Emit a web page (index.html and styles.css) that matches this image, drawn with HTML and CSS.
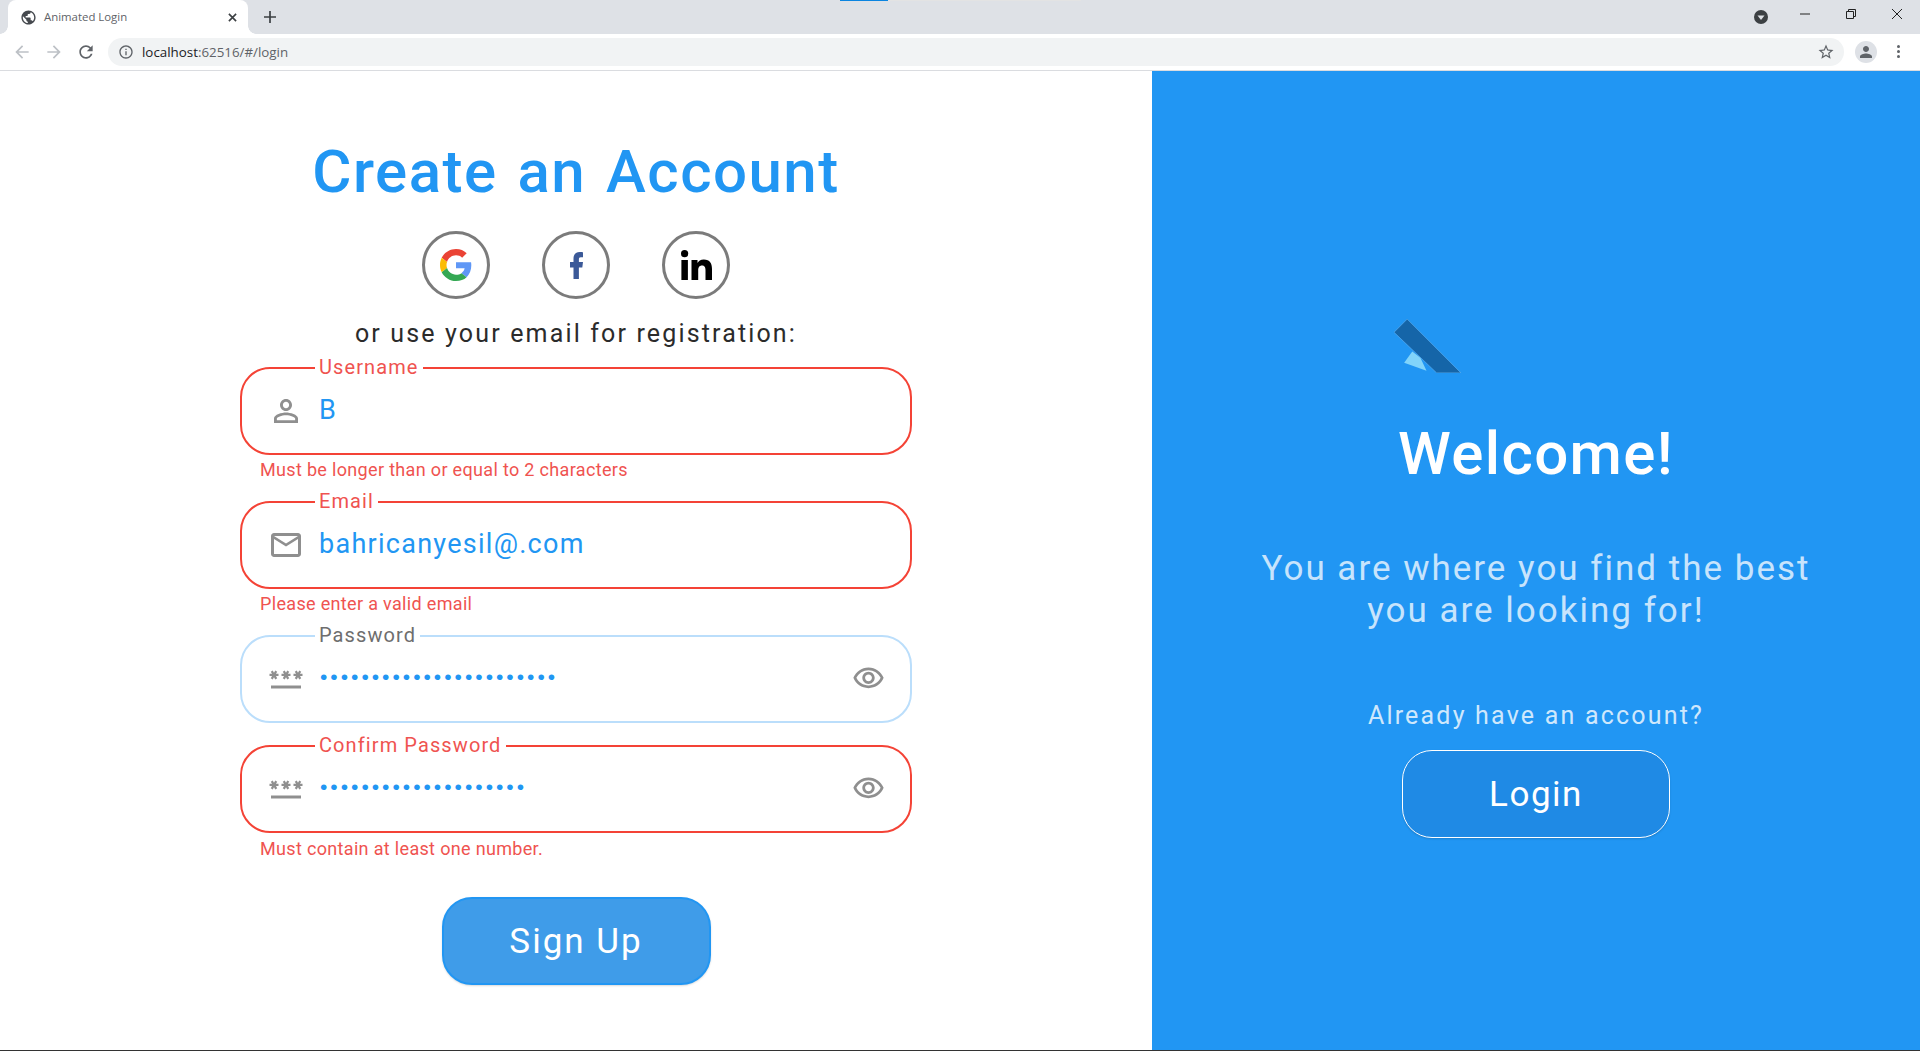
FILE: index.html
```html
<!DOCTYPE html>
<html lang="en">
<head>
    <meta charset="UTF-8">
    <title>Animated Login</title>
    <link rel="stylesheet" href="styles.css">
</head>
<body>
    <div class="tabStrip">
        <div class="tab">
            <svg class="tabIcon" viewBox="0 0 24 24"><path d="M12 2C6.48 2 2 6.48 2 12s4.48 10 10 10 10-4.48 10-10S17.52 2 12 2zm-1 17.93c-3.95-.49-7-3.85-7-7.93 0-.62.08-1.21.21-1.79L9 15v1c0 1.1.9 2 2 2v1.93zm6.9-2.54c-.26-.81-1-1.39-1.9-1.39h-1v-3c0-.55-.45-1-1-1H8v-2h2c.55 0 1-.45 1-1V7h2c1.1 0 2-.9 2-2v-.41c2.93 1.19 5 4.06 5 7.41 0 2.08-.8 3.97-2.1 5.39z"/></svg>
            <span class="tabTitle">Animated Login</span>
            <svg class="tabClose" viewBox="0 0 10 10"><path d="M1 1l8 8M9 1l-8 8"/></svg>
        </div>
        <svg class="newTab" viewBox="0 0 12 12"><path d="M6 0v12M0 6h12"/></svg>
        <div class="loadBar"><div class="loadDone"></div><div class="loadRest"></div></div>
        <div class="winControls">
            <svg class="winDrop" viewBox="0 0 14 14"><circle cx="7" cy="7" r="7"/><path class="winDropArrow" d="M3.5 5.5h7L7 10z"/></svg>
            <svg class="winBtn winMin" viewBox="0 0 10 10"><path d="M0 5h10"/></svg>
            <svg class="winBtn winRestore" viewBox="0 0 10 10"><path d="M.5 2.5h7v7h-7zM2.5 2.5v-2h7v7h-2"/></svg>
            <svg class="winBtn winClose" viewBox="0 0 10 10"><path d="M0 0l10 10M10 0L0 10"/></svg>
        </div>
    </div>

    <div class="toolbar">
        <svg class="navIcon navOff" viewBox="0 0 24 24"><path d="M20 11H7.83l5.59-5.59L12 4l-8 8 8 8 1.41-1.41L7.83 13H20v-2z"/></svg>
        <svg class="navIcon navOff" viewBox="0 0 24 24"><path d="M12 4l-1.41 1.41L16.17 11H4v2h12.17l-5.58 5.59L12 20l8-8z"/></svg>
        <svg class="navIcon" viewBox="0 0 24 24"><path d="M17.65 6.35C16.2 4.9 14.21 4 12 4c-4.42 0-7.99 3.58-7.99 8s3.57 8 7.99 8c3.73 0 6.84-2.55 7.73-6h-2.08c-.82 2.33-3.04 4-5.65 4-3.31 0-6-2.69-6-6s2.69-6 6-6c1.66 0 3.14.69 4.22 1.78L13 11h7V4l-2.35 2.35z"/></svg>
        <div class="addressBar">
            <svg class="infoIcon" viewBox="0 0 24 24"><path d="M11 7h2v2h-2zm0 4h2v6h-2zm1-9C6.48 2 2 6.48 2 12s4.48 10 10 10 10-4.48 10-10S17.52 2 12 2zm0 18c-4.41 0-8-3.59-8-8s3.59-8 8-8 8 3.59 8 8-3.59 8-8 8z"/></svg>
            <span class="url">localhost<span class="urlPath">:62516/#/login</span></span>
            <svg class="starIcon" viewBox="0 0 24 24"><path d="M22 9.24l-7.19-.62L12 2 9.19 8.63 2 9.24l5.46 4.73L5.82 21 12 17.27 18.18 21l-1.63-7.03L22 9.24zM12 15.4l-3.76 2.27 1-4.28-3.32-2.88 4.38-.38L12 6.1l1.71 4.04 4.38.38-3.32 2.88 1 4.28L12 15.4z"/></svg>
        </div>
        <div class="profile"><svg viewBox="0 0 24 24"><path d="M12 12c2.21 0 4-1.79 4-4s-1.79-4-4-4-4 1.79-4 4 1.79 4 4 4zm0 2c-2.67 0-8 1.34-8 4v2h16v-2c0-2.66-5.33-4-8-4z"/></svg></div>
        <div class="menuDots"><i></i><i></i><i></i></div>
    </div>

    <div class="page">
        <div class="signupPanel">
            <h1 class="signupTitle">Create an Account</h1>
            <div class="socialRow">
                <div class="socialBtn">
                    <svg class="googleIcon" viewBox="0 0 48 48">
                        <path fill="#EA4335" d="M24 9.5c3.54 0 6.71 1.22 9.21 3.6l6.85-6.85C35.9 2.38 30.47 0 24 0 14.62 0 6.51 5.38 2.56 13.22l7.98 6.19C12.43 13.72 17.74 9.5 24 9.5z"/>
                        <path fill="#5f97f6" d="M46.98 24.55c0-1.57-.15-3.09-.38-4.55H24v9.02h12.94c-.58 2.96-2.26 5.48-4.78 7.18l7.73 6c4.51-4.18 7.09-10.36 7.09-17.65z"/>
                        <path fill="#FBBC05" d="M10.53 28.59c-.48-1.45-.76-2.99-.76-4.59s.27-3.14.76-4.59l-7.98-6.19C.92 16.46 0 20.12 0 24c0 3.88.92 7.54 2.56 10.78l7.97-6.19z"/>
                        <path fill="#34A853" d="M24 48c6.48 0 11.93-2.13 15.89-5.81l-7.73-6c-2.15 1.45-4.92 2.3-8.16 2.3-6.26 0-11.57-4.22-13.47-9.91l-7.98 6.19C6.51 42.62 14.62 48 24 48z"/>
                    </svg>
                </div>
                <div class="socialBtn">
                    <svg class="facebookIcon" viewBox="0 0 13 27"><path d="M3.5 27V15.5H0V10h3.5V6.5C3.5 2.2 6 0 9.8 0c1.4 0 2.7.1 3.2.2v5h-2.2c-1.5 0-1.9.8-1.9 2V10H13l-.7 5.5H8.9V27z"/></svg>
                </div>
                <div class="socialBtn">
                    <svg class="linkedinIcon" viewBox="0 0 31 30"><circle cx="3.6" cy="3.6" r="3.6"/><path d="M.4 10h6.5v20H.4zM10.5 10h6v3c1-1.8 3-3.5 6.3-3.5 6.2 0 8.2 4 8.2 9.5V30h-6.5V20.5c0-2.5-.5-5-3.4-5-3 0-3.9 2.2-3.9 5V30h-6.7z"/></svg>
                </div>
            </div>
            <p class="signupHint">or use your email for registration:</p>

            <div class="field invalid">
                <label class="fieldLabel">Username</label>
                <svg class="fieldIcon" viewBox="0 0 24 24"><path d="M12 5.9c1.16 0 2.1.94 2.1 2.1s-.94 2.1-2.1 2.1S9.9 9.16 9.9 8s.94-2.1 2.1-2.1m0 9c2.97 0 6.1 1.46 6.1 2.1v1.1H5.9V17c0-.64 3.13-2.1 6.1-2.1M12 4C9.79 4 8 5.79 8 8s1.79 4 4 4 4-1.79 4-4-1.79-4-4-4zm0 9c-2.67 0-8 1.34-8 4v3h16v-3c0-2.66-5.33-4-8-4z"/></svg>
                <span class="fieldValue">B</span>
            </div>
            <div class="fieldError">Must be longer than or equal to 2 characters</div>

            <div class="field invalid">
                <label class="fieldLabel">Email</label>
                <svg class="fieldIcon" viewBox="0 0 24 24"><path d="M20 4H4c-1.1 0-1.99.9-1.99 2L2 18c0 1.1.9 2 2 2h16c1.1 0 2-.9 2-2V6c0-1.1-.9-2-2-2zm0 14H4V8l8 5 8-5v10zm-8-7L4 6h16l-8 5z"/></svg>
                <span class="fieldValue">bahricanyesil@.com</span>
            </div>
            <div class="fieldError">Please enter a valid email</div>

            <div class="field">
                <label class="fieldLabel">Password</label>
                <svg class="fieldIcon keyIcon" viewBox="0 0 24 24"><path d="M2 17h20v2H2v-2zm1.15-4.05L4 11.47l.85 1.48 1.3-.75-.85-1.48H7v-1.5H5.3l.85-1.47L4.85 7 4 8.47 3.15 7l-1.3.75.85 1.47H1v1.5h1.7l-.85 1.48 1.3.75zm6.7-.75 1.3.75.85-1.48.85 1.48 1.3-.75-.85-1.48H15v-1.5h-1.7l.85-1.47-1.3-.75L12 8.47 11.15 7l-1.3.75.85 1.47H9v1.5h1.7l-.85 1.48zM23 9.22h-1.7l.85-1.47-1.3-.75L20 8.47 19.15 7l-1.3.75.85 1.47H17v1.5h1.7l-.85 1.48 1.3.75.85-1.48.85 1.48 1.3-.75-.85-1.48H23v-1.5z"/></svg>
                <span class="fieldDots">•••••••••••••••••••••••</span>
                <svg class="fieldEye" viewBox="0 0 24 24"><path d="M12 6c3.79 0 7.17 2.13 8.82 5.5C19.17 14.87 15.79 17 12 17s-7.17-2.13-8.82-5.5C4.83 8.13 8.21 6 12 6m0-2C7 4 2.73 7.11 1 11.5 2.73 15.89 7 19 12 19s9.27-3.11 11-7.5C21.27 7.11 17 4 12 4zm0 5c1.38 0 2.5 1.12 2.5 2.5S13.38 14 12 14s-2.5-1.12-2.5-2.5S10.62 9 12 9m0-2c-2.48 0-4.5 2.02-4.5 4.5S9.52 16 12 16s4.5-2.02 4.5-4.5S14.48 7 12 7z"/></svg>
            </div>

            <div class="field invalid">
                <label class="fieldLabel">Confirm Password</label>
                <svg class="fieldIcon keyIcon" viewBox="0 0 24 24"><path d="M2 17h20v2H2v-2zm1.15-4.05L4 11.47l.85 1.48 1.3-.75-.85-1.48H7v-1.5H5.3l.85-1.47L4.85 7 4 8.47 3.15 7l-1.3.75.85 1.47H1v1.5h1.7l-.85 1.48 1.3.75zm6.7-.75 1.3.75.85-1.48.85 1.48 1.3-.75-.85-1.48H15v-1.5h-1.7l.85-1.47-1.3-.75L12 8.47 11.15 7l-1.3.75.85 1.47H9v1.5h1.7l-.85 1.48zM23 9.22h-1.7l.85-1.47-1.3-.75L20 8.47 19.15 7l-1.3.75.85 1.47H17v1.5h1.7l-.85 1.48 1.3.75.85-1.48.85 1.48 1.3-.75-.85-1.48H23v-1.5z"/></svg>
                <span class="fieldDots">••••••••••••••••••••</span>
                <svg class="fieldEye" viewBox="0 0 24 24"><path d="M12 6c3.79 0 7.17 2.13 8.82 5.5C19.17 14.87 15.79 17 12 17s-7.17-2.13-8.82-5.5C4.83 8.13 8.21 6 12 6m0-2C7 4 2.73 7.11 1 11.5 2.73 15.89 7 19 12 19s9.27-3.11 11-7.5C21.27 7.11 17 4 12 4zm0 5c1.38 0 2.5 1.12 2.5 2.5S13.38 14 12 14s-2.5-1.12-2.5-2.5S10.62 9 12 9m0-2c-2.48 0-4.5 2.02-4.5 4.5S9.52 16 12 16s4.5-2.02 4.5-4.5S14.48 7 12 7z"/></svg>
            </div>
            <div class="fieldError fieldErrorLast">Must contain at least one number.</div>

            <button class="signupBtn">Sign Up</button>
        </div>

        <div class="welcomePanel">
            <svg class="welcomeLogo" viewBox="0 0 66 53">
                <path class="logoWing" d="M18 32L10 43 32 51 26 38z"/>
                <path class="logoBody" d="M13 0L0 13 42 53H66z"/>
            </svg>
            <h2 class="welcomeTitle">Welcome!</h2>
            <p class="welcomeText">You are where you find the best<br>you are looking for!</p>
            <p class="welcomeHint">Already have an account?</p>
            <button class="loginBtn">Login</button>
        </div>
    </div>
</body>
</html>
```

FILE: styles.css
```css
* {
    box-sizing: border-box;
}
html, body {
    height: 1051px;
    overflow: hidden;
}
body {
    margin: 0;
    font-family: Roboto, sans-serif;
    background: white;
    border-bottom: 1px solid #333;
}

/* browser frame */
.tabStrip {
    display: flex;
    align-items: center;
    position: relative;
    height: 34px;
    padding-left: 8px;
    background: #dee1e6;
}
.tab {
    display: flex;
    align-items: center;
    position: relative;
    width: 240px;
    height: 34px;
    padding: 0 12px;
    background: white;
    border-radius: 8px 8px 0 0;
}
.tab::before, .tab::after {
    content: "";
    position: absolute;
    bottom: 0;
    width: 8px;
    height: 8px;
}
.tab::before {
    left: -8px;
    background: radial-gradient(circle at 0 0, #dee1e6 7.5px, white 8px);
}
.tab::after {
    right: -8px;
    background: radial-gradient(circle at 100% 0, #dee1e6 7.5px, white 8px);
}
.tabIcon {
    width: 17px;
    height: 17px;
    fill: #45494e;
}
.tabTitle {
    margin-left: 7px;
    margin-bottom: 1px;
    font: 11.4px "Open Sans", sans-serif;
    color: #5f6368;
}
.tabClose {
    width: 9px;
    height: 9px;
    margin-left: auto;
    margin-right: -1px;
    fill: none;
    stroke: #3c4043;
    stroke-width: 1.8;
}
.newTab {
    width: 12px;
    height: 12px;
    margin-left: 16px;
    fill: none;
    stroke: #3c4043;
    stroke-width: 1.7;
}
.loadBar {
    display: flex;
    position: absolute;
    top: 0;
    left: 840px;
}
.loadDone {
    width: 48px;
    height: 1px;
    background: #0a84e0;
}
.loadRest {
    width: 193px;
    height: 1px;
    background: #e3e3e3;
}
.winControls {
    display: flex;
    align-items: center;
    margin-left: auto;
    padding-right: 18px;
    margin-top: -6px;
}
.winDrop {
    width: 14px;
    height: 14px;
    margin-top: 6px;
    margin-right: 32px;
    fill: #3c4043;
}
.winDropArrow {
    fill: #dee1e6;
}
.winBtn {
    width: 10px;
    height: 10px;
    fill: none;
    stroke: #222;
    stroke-width: 1;
}
.winMin {
    margin-right: 36px;
}
.winRestore {
    margin-right: 36px;
}

.toolbar {
    display: flex;
    align-items: center;
    height: 37px;
    padding: 0 13px 1px 12px;
    background: white;
    border-bottom: 1px solid #dadce0;
}
.navIcon {
    width: 20px;
    height: 20px;
    margin-right: 12px;
    fill: #5f6368;
}
.navOff {
    fill: #bdc1c6;
}
.addressBar {
    display: flex;
    align-items: center;
    flex: 1;
    height: 28px;
    padding: 0 9px 0 10px;
    border-radius: 14px;
    background: #f1f3f4;
}
.infoIcon {
    width: 16px;
    height: 16px;
    fill: #5f6368;
}
.url {
    margin-left: 8px;
    font: 13.35px "Open Sans", sans-serif;
    color: #202124;
}
.urlPath {
    color: #5f6368;
}
.starIcon {
    width: 18px;
    height: 18px;
    margin-left: auto;
    fill: #5f6368;
}
.profile {
    display: flex;
    align-items: center;
    justify-content: center;
    width: 22px;
    height: 22px;
    margin-left: 11px;
    border-radius: 50%;
    background: #dee1e6;
}
.profile svg {
    width: 18px;
    height: 18px;
    fill: #5f6368;
}
.menuDots {
    display: flex;
    flex-direction: column;
    gap: 2px;
    margin-left: 20px;
    margin-right: 7px;
}
.menuDots i {
    width: 3px;
    height: 3px;
    border-radius: 50%;
    background: #5f6368;
}

/* page */
.page {
    display: flex;
    height: 979px;
}
.signupPanel {
    display: flex;
    flex-direction: column;
    align-items: center;
    width: 60%;
    padding-top: 67px;
}
.signupTitle {
    margin: 0;
    font-size: 60px;
    font-weight: 500;
    line-height: 68px;
    letter-spacing: 1.5px;
    word-spacing: 3.4px;
    color: #2196f3;
}
.socialRow {
    display: flex;
    gap: 52px;
    margin-top: 25px;
}
.socialBtn {
    display: flex;
    align-items: center;
    justify-content: center;
    width: 68px;
    height: 68px;
    border: 3.5px solid #7b7b7b;
    border-radius: 50%;
}
.googleIcon {
    width: 32px;
    height: 32px;
}
.facebookIcon {
    width: 13px;
    height: 27px;
    fill: #3b5998;
}
.linkedinIcon {
    width: 31px;
    height: 30px;
}
.signupHint {
    margin: 20px 0 18px;
    font-size: 25px;
    line-height: 30px;
    letter-spacing: 2.15px;
    color: #2b2b2b;
}

.field {
    display: flex;
    align-items: center;
    position: relative;
    flex: none;
    width: 672px;
    height: 88px;
    margin-bottom: 22px;
    padding: 0 26px 2px;
    border: 2px solid #bbdefb;
    border-radius: 30px;
}
.field.invalid {
    border-color: #f44336;
    margin-bottom: 0;
}
.fieldLabel {
    position: absolute;
    top: -14px;
    left: 73px;
    padding: 0 4px;
    background: white;
    font-size: 20px;
    line-height: 24px;
    letter-spacing: 1.1px;
    color: #6e6e6e;
}
.invalid .fieldLabel {
    color: #ef5350;
}
.fieldIcon {
    flex: none;
    width: 36px;
    height: 36px;
    margin-top: 2px;
    fill: #8f8f8f;
}
.keyIcon {
    margin-top: 0;
}
.fieldValue {
    margin-left: 15px;
    font-size: 27px;
    letter-spacing: 1.27px;
    color: #2196f3;
}
.fieldDots {
    margin-left: 16px;
    margin-bottom: 2px;
    font-family: "Liberation Sans", sans-serif;
    font-size: 21px;
    letter-spacing: 3px;
    color: #2196f3;
}
.fieldEye {
    flex: none;
    width: 33px;
    height: 33px;
    margin-left: auto;
    margin-right: -1px;
    fill: #8f8f8f;
}
.fieldError {
    align-self: flex-start;
    flex: none;
    height: 24px;
    margin: 3px 0 19px 260px;
    font-size: 18px;
    line-height: 24px;
    letter-spacing: .33px;
    color: #ef5350;
}
.fieldErrorLast {
    margin-top: 4px;
    margin-bottom: 18px;
}
.signupBtn {
    width: 269px;
    height: 88px;
    margin-top: 18px;
    border: 2px solid #2196f3;
    border-radius: 30px;
    background: #3f9ce9;
    font-family: Roboto, sans-serif;
    font-size: 35px;
    letter-spacing: 2px;
    color: white;
    box-shadow: 0 1px 2px rgba(0, 0, 0, 0.15);
}

.welcomePanel {
    display: flex;
    flex-direction: column;
    align-items: center;
    width: 40%;
    padding-top: 248px;
    background: #2196f3;
    text-align: center;
}
.welcomeLogo {
    flex: none;
    width: 67px;
    height: 54px;
    margin-right: 217px;
}
.logoBody {
    fill: #1565a8;
    stroke: #64b5f6;
    stroke-width: .6;
}
.logoWing {
    fill: #81d4fa;
}
.welcomeTitle {
    margin: 45px 0 0;
    font-size: 60px;
    font-weight: 500;
    line-height: 72px;
    letter-spacing: 1.4px;
    color: white;
}
.welcomeText {
    margin: 58px 0 0;
    font-size: 35px;
    line-height: 42px;
    letter-spacing: 2px;
    color: rgba(255, 255, 255, 0.75);
}
.welcomeHint {
    margin: 69px 0 0;
    font-size: 25px;
    line-height: 30px;
    letter-spacing: 2.2px;
    color: rgba(255, 255, 255, 0.8);
}
.loginBtn {
    width: 268px;
    height: 88px;
    margin-top: 19px;
    border: 1.5px solid white;
    border-radius: 30px;
    background: #1f8ae5;
    font-family: Roboto, sans-serif;
    font-size: 35px;
    letter-spacing: 1.5px;
    color: white;
    box-shadow: 0 1px 2px rgba(0, 0, 0, 0.15);
}
```
